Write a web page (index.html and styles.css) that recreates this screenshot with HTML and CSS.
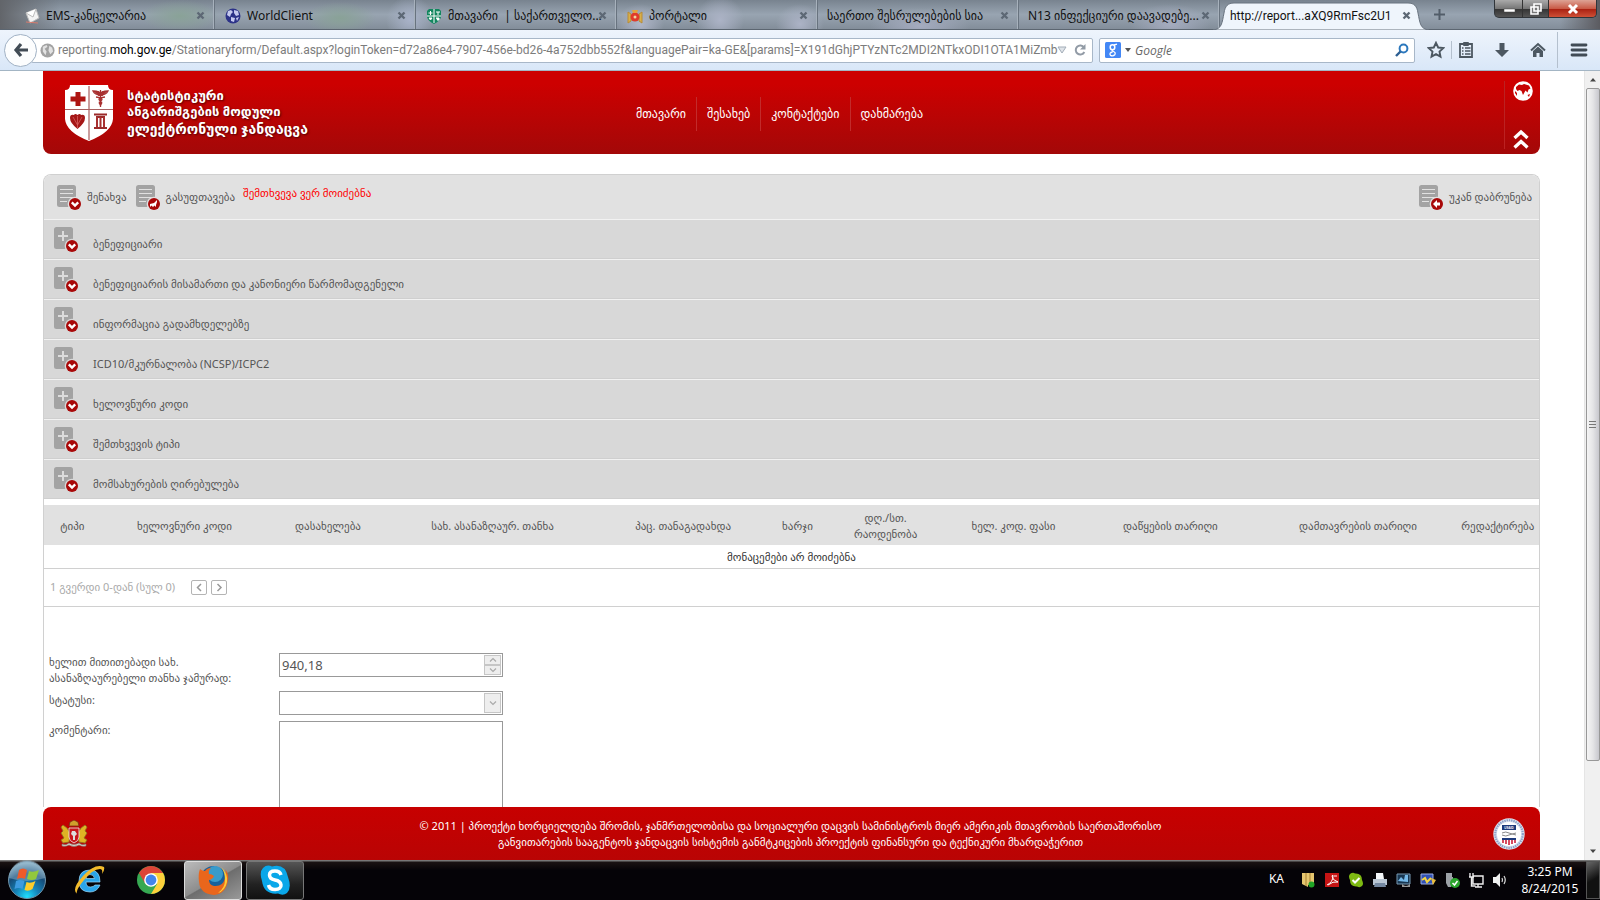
FILE: index.html
```html
<!DOCTYPE html>
<html lang="ka">
<head>
<meta charset="utf-8">
<title>http://reporting.moh.gov.ge</title>
<link rel="stylesheet" href="styles.css">
</head>
<body>
<svg class="defs" aria-hidden="true">
  <symbol id="close" viewBox="0 0 9 9"><path d="M1.500 1.500l6 6M7.500 1.500l-6 6" stroke="#5d6875" stroke-width="2.400"/></symbol>
  <symbol id="doc" viewBox="0 0 26 27"><rect x="1" y="1" width="19" height="22" rx="2.500" fill="#a3a3a3"/><path d="M4 5.500h13M4 9.500h13M4 13.500h13M4 17.500h7" stroke="#e1e1e1"/><circle cx="19" cy="20" r="7.300" fill="#e1e1e1"/><circle cx="19" cy="20" r="6" fill="#a80808"/></symbol>
  <symbol id="plus" viewBox="0 0 26 27"><rect x="1" y="1" width="19" height="22" rx="2.500" fill="#a3a3a3"/><path d="M5 10h10M10 5v10" stroke="#dcdcdc" stroke-width="2"/><circle cx="19" cy="20" r="7.300" fill="#d8d8d8"/><circle cx="19" cy="20" r="6" fill="#a80808"/><path d="M15.800 18.300l3.200 3.200 3.200-3.200" fill="none" stroke="#fff" stroke-width="2.400"/></symbol>
</svg>

<div class="tabs">
  <div class="tab"><svg class="fav" viewBox="0 0 16 16"><path d="M2 5l10-4 3 9-9 5z" fill="#f3f3f3" stroke="#bbb"/><path d="M2 5l7 4 3-8" fill="#fff" stroke="#bbb"/><path d="M2 14l12 1" stroke="#d87a6c"/></svg><span>EMS-კანცელარია</span><button aria-label="დახურვა"><svg><use href="#close"/></svg></button></div>
  <div class="tab"><svg class="fav" viewBox="0 0 16 16"><circle cx="8" cy="8" r="7.500" fill="#2c3288"/><path d="M3 3l3-1 2 2-2 2-1 3-3-2zM9 2l4 1 1 4-3 1-2-3zM6 9l4 1-1 4-3-1zM11 10l3-1-2 4z" fill="#c5c9ee"/></svg><span>WorldClient</span><button aria-label="დახურვა"><svg><use href="#close"/></svg></button></div>
  <div class="tab"><svg class="fav" viewBox="0 0 16 16"><path d="M3 1h10l2 2v6q-1 4-7 7q-6-3-7-7V3z" fill="#12865f"/><path d="M8 1v14M1 8h14" stroke="#fff"/><path d="M4.500 3v4M2.500 5h4M10 4h4M12 4v3M3 10h3l-1.500 2zM10 10h3v2h-2" stroke="#fff" fill="#fff"/></svg><span>მთავარი &nbsp;| საქართველო...</span><button aria-label="დახურვა"><svg><use href="#close"/></svg></button></div>
  <div class="tab"><svg class="fav" viewBox="0 0 16 16"><path d="M1 4l3 2v7l-3 2zM15 4l-3 2v7l3 2z" fill="#d8b04a" stroke="#b88b37"/><circle cx="8" cy="9" r="4.500" fill="#e03b2c"/><path d="M5 2h6l-1 3H6z" fill="#e4a13d"/><circle cx="8" cy="9" r="1.500" fill="#f0d4a0"/></svg><span>პორტალი</span><button aria-label="დახურვა"><svg><use href="#close"/></svg></button></div>
  <div class="tab bare"><span>საერთო შესრულებების სია</span><button aria-label="დახურვა"><svg><use href="#close"/></svg></button></div>
  <div class="tab bare"><span>N13 ინფექციური დაავადებე...</span><button aria-label="დახურვა"><svg><use href="#close"/></svg></button></div>
  <div class="tab active"><svg class="shape" viewBox="0 0 216 29" preserveAspectRatio="none"><path d="M0 29C9 28 9 22 11 12C12 5 15 2 21 2H195C201 2 204 5 205 12C207 22 207 28 216 29z" fill="#eff5fc" stroke="#69737f" stroke-width="1"/></svg><span>http://report...aXQ9RmFsc2U1</span><button aria-label="დახურვა"><svg><use href="#close"/></svg></button></div>
  <button class="newtab" aria-label="ახალი ჩანართი"><svg viewBox="0 0 11 11"><path d="M5.500 0v11M0 5.500h11" stroke="#525d69" stroke-width="2"/></svg></button>
  <div class="winbtns">
    <button aria-label="ჩაკეცვა"><svg viewBox="0 0 20 16"><rect x="5" y="8" width="11" height="3" fill="#fff" stroke="#444" stroke-width=".5"/></svg></button>
    <button aria-label="აღდგენა"><svg viewBox="0 0 20 16"><path d="M8 3h7v7h-7zM5 6h7v7H5z" fill="#777" stroke="#fff" stroke-width="1.600"/></svg></button>
    <button class="x" aria-label="დახურვა"><svg viewBox="0 0 20 16"><path d="M6 4l8 8M14 4l-8 8" stroke="#fff" stroke-width="3"/></svg></button>
  </div>
</div>

<div class="navbar">
  <button class="back" aria-label="უკან"><svg viewBox="0 0 16 16"><path d="M8 2L3 8l5 6M3 8h12" fill="none" stroke="#414b55" stroke-width="3.200"/></svg></button>
  <div class="url">
    <svg class="world" viewBox="0 0 16 16"><circle cx="8" cy="8" r="7.500" fill="#a2a2a2"/><path d="M3 4l4-2 1 2-3 2 2 3-1 4-3-4zM10 3l3 2 1 4-3 3-2-4z" fill="#e2e2e2"/></svg>
    <a href="#">reporting.<b>moh.gov.ge</b>/Stationaryform/Default.aspx?loginToken=d72a86e4-7907-456e-bd26-4a752dbb552f&amp;languagePair=ka-GE&amp;[params]=X191dGhjPTYzNTc2MDI2NTkxODI1OTA1MiZmb</a>
    <svg class="drop" viewBox="0 0 10 8"><path d="M1 1h8L5 7z" fill="#dfe4e9" stroke="#a3adb8"/></svg>
    <svg class="reload" viewBox="0 0 12 12"><path d="M10 3.500A4.500 4.500 0 1 0 10.300 8" fill="none" stroke="#929ba6" stroke-width="2"/><path d="M11.500 0v5.500H6z" fill="#929ba6"/></svg>
  </div>
  <div class="search">
    <svg class="g" viewBox="0 0 16 16"><rect width="16" height="16" rx="1.500" fill="#4387f5"/><ellipse cx="7.500" cy="5.200" rx="2.300" ry="2.500" fill="none" stroke="#fff" stroke-width="1.500"/><path d="M9 3l3-.8M8 7.500q-2 1 .5 2t1.300 3.300q-1.800 1.700-4.300.5q-1.800-2.500 2-3.300" fill="none" stroke="#fff" stroke-width="1.300"/></svg>
    <svg class="caret" viewBox="0 0 6 4"><path d="M0 0h6L3 4z" fill="#555"/></svg>
    <input type="text" placeholder="Google" aria-label="Google">
    <svg class="mag" viewBox="0 0 14 14"><circle cx="8.500" cy="5.500" r="3.900" fill="none" stroke="#2c78bd" stroke-width="2"/><path d="M5.500 8.500L1 13" stroke="#2c5f92" stroke-width="2.400"/></svg>
  </div>
  <div class="tools">
    <button aria-label="სანიშნე"><svg viewBox="0 0 18 18"><path d="M9 1.800l2.200 4.700 5.100.6-3.800 3.500 1 5.100L9 13.200l-4.500 2.500 1-5.100L1.700 7.100l5.100-.6z" fill="none" stroke="#4c5761" stroke-width="1.900"/></svg></button>
    <i class="sep"></i>
    <button aria-label="სია"><svg viewBox="0 0 18 18"><path d="M3 3h12v13H3z" fill="none" stroke="#4c5761" stroke-width="1.800"/><rect x="6" y="1" width="6" height="4" rx="1" fill="#4c5761"/><path d="M5 7h1.500M5 10h1.500M5 13h1.500M8 7h5.500M8 10h5.500M8 13h5.500" stroke="#4c5761" stroke-width="1.400"/></svg></button>
    <button aria-label="ჩამოტვირთვები"><svg viewBox="0 0 18 18"><path d="M6.500 2h5v7H16l-7 7-7-7h4.500z" fill="#4c5761"/></svg></button>
    <button aria-label="საწყისი"><svg viewBox="0 0 18 18"><path d="M2 9.500L9 3l7 6.500" fill="none" stroke="#4c5761" stroke-width="2"/><path d="M4 10l5-4.500L14 10v6h-3.500v-4h-3v4H4z" fill="#4c5761"/></svg></button>
    <i class="sep tall"></i>
    <button aria-label="მენიუ"><svg viewBox="0 0 18 18"><path d="M2 4h14M2 9h14M2 14h14" stroke="#414b55" stroke-width="2.800" stroke-linecap="round"/></svg></button>
  </div>
</div>

<div class="view">
  <div class="page">
    <header class="head">
      <div class="ident">
        <svg class="logo" viewBox="0 0 48 56"><path d="M5 0H43Q43 5 48 5V34Q47 47 24 56Q1 47 0 34V5Q5 5 5 0z" fill="#fff"/><path d="M24 1v54M0 24.500h48" stroke="#a86060" stroke-width="1.200"/><path d="M13 7v14M5.500 14h15" stroke="#ae1512" stroke-width="5"/><path d="M35.500 5v17M28 6q7 0 7.500 3q.5-3 7.500-3q-2 4-7.500 4q-5.500 0-7.500-4zM31 12q9 1 4.500 4q-3 2 1 4M40 12q-9 1-4.500 4q3 2-1 4" fill="none" stroke="#a83030" stroke-width="1.300"/><path d="M28.500 6h5l2 3 2-3h5l-5 5h-4z" fill="#a83030"/><path d="M12.500 44Q5 38 5 33q0-4 4-3q1-2 3.500 0q2.500-2 3.500 0q4-1 4 3q0 5-7.500 11z" fill="#a51717"/><path d="M12.500 43V31M12.500 40L8 32M12.500 40l4.500-8" stroke="#d66" stroke-width=".7"/><path d="M29 29.500h13M31 32h9M29 43h13" stroke="#9b2a2a" stroke-width="2"/><path d="M32 32v10M35.500 32v10M39 32v10" stroke="#a83030" stroke-width="2"/></svg>
        <div class="brand"><p>სტატისტიკური</p><p>ანგარიშგების მოდული</p><p class="sub">ელექტრონული ჯანდაცვა</p></div>
      </div>
      <nav><a href="#">მთავარი</a><a href="#">შესახებ</a><a href="#">კონტაქტები</a><a href="#">დახმარება</a></nav>
      <div class="side">
        <button aria-label="ენა"><svg viewBox="0 0 20 20"><circle cx="10" cy="10" r="9.800" fill="#fff"/><path d="M3 6l3-2.500 3 .5 2-1 5 1.500 1.500 3-2 1-1 3-2-2-2.500 4.500-1.500-4-2-1-2 1-1.500-2zM2 10l2 2v3l-2-3zM14.500 14l2.500-1-1 3z" fill="#c70505"/></svg></button>
        <button aria-label="აკეცვა"><svg viewBox="0 0 20 20"><path d="M1.500 9L8 3l6.500 6M1.500 18.500L8 12.500l6.500 6" fill="none" stroke="#fff" stroke-width="3.300"/></svg></button>
      </div>
    </header>

    <main class="panel">
      <div class="toolbar">
        <button><svg><use href="#doc"/><path d="M15.800 18.300l3.200 3.200 3.200-3.200" fill="none" stroke="#fff" stroke-width="2.400"/></svg>შენახვა</button>
        <button><svg><use href="#doc"/><path d="M15 23v-3l4-1 3-3v2l-1 3v2l-1.500-1.500L18 23l-1.500-1.500z" fill="#fff"/></svg>გასუფთავება</button>
        <p class="error">შემთხვევა ვერ მოიძებნა</p>
        <button class="ret"><svg><use href="#doc"/><path d="M15 20l4-4v2.500h3v3h-3V24z" fill="#fff"/></svg>უკან დაბრუნება</button>
      </div>
      <button class="row"><svg><use href="#plus"/></svg><span>ბენეფიციარი</span></button>
      <button class="row"><svg><use href="#plus"/></svg><span>ბენეფიციარის მისამართი და კანონიერი წარმომადგენელი</span></button>
      <button class="row"><svg><use href="#plus"/></svg><span>ინფორმაცია გადამხდელებზე</span></button>
      <button class="row"><svg><use href="#plus"/></svg><span>ICD10/მკურნალობა (NCSP)/ICPC2</span></button>
      <button class="row"><svg><use href="#plus"/></svg><span>ხელოვნური კოდი</span></button>
      <button class="row"><svg><use href="#plus"/></svg><span>შემთხვევის ტიპი</span></button>
      <button class="row"><svg><use href="#plus"/></svg><span>მომსახურების ღირებულება</span></button>

      <table class="grid">
        <colgroup><col class="c1"><col class="c2"><col class="c3"><col class="c4"><col class="c5"><col class="c6"><col class="c7"><col class="c8"><col class="c9"><col class="c10"><col class="c11"></colgroup>
        <thead><tr><th>ტიპი</th><th>ხელოვნური კოდი</th><th>დასახელება</th><th>სახ. ასანაზღაურ. თანხა</th><th>პაც. თანაგადახდა</th><th>ხარჯი</th><th>დღ./სთ.<br>რაოდენობა</th><th>ხელ. კოდ. ფასი</th><th>დაწყების თარიღი</th><th>დამთავრების თარიღი</th><th>რედაქტირება</th></tr></thead>
        <tbody><tr><td colspan="11">მონაცემები არ მოიძებნა</td></tr></tbody>
      </table>
      <div class="pager"><span>1 გვერდი 0-დან (სულ 0)</span><button aria-label="წინა"><svg viewBox="0 0 14 13"><path d="M9 3L5.500 6.500 9 10" fill="none" stroke="#999" stroke-width="1.500"/></svg></button><button aria-label="შემდეგი"><svg viewBox="0 0 14 13"><path d="M5.500 3L9 6.500 5.500 10" fill="none" stroke="#999" stroke-width="1.500"/></svg></button></div>

      <form class="form">
        <label for="sum">ხელით მითითებადი სახ.<br>ასანაზღაურებელი თანხა ჯამურად:</label>
        <div class="field"><input id="sum" type="text" value="940,18"><div class="spin"><button type="button" aria-label="მეტი"><svg viewBox="0 0 10 6"><path d="M2 4.500l3-3 3 3" fill="none" stroke="#aaa" stroke-width="1.200"/></svg></button><button type="button" aria-label="ნაკლები"><svg viewBox="0 0 10 6"><path d="M2 1.500l3 3 3-3" fill="none" stroke="#aaa" stroke-width="1.200"/></svg></button></div></div>
        <label for="status">სტატუსი:</label>
        <div class="field"><select id="status"><option></option></select><span class="arrow"><svg viewBox="0 0 10 6"><path d="M2 1.500l3 3 3-3" fill="none" stroke="#aaa" stroke-width="1.200"/></svg></span></div>
        <label for="note">კომენტარი:</label>
        <textarea id="note"></textarea>
      </form>
    </main>

    <footer class="foot">
      <svg class="arms" viewBox="0 0 28 28"><path d="M3 5l4 3 3 5-1 9-6 1-2-3 3-2-3-5 2-2-2-4zM25 5l-4 3-3 5 1 9 6 1 2-3-3-2 3-5-2-2 2-4z" fill="#dfb324" stroke="#8c7420" stroke-width=".8"/><path d="M9 8h10v9q0 4-5 6q-5-2-5-6z" fill="#c9161c" stroke="#eee" stroke-width=".8"/><path d="M12 11h3l2 3-2 2v4h-2v-4l-2-2z" fill="#ddd"/><path d="M9 6l1-4 4-2 4 2 1 4z" fill="#cf9f2c" stroke="#7b2815" stroke-width=".8"/><path d="M2 24q4 2 7-1q5 3 10 0q3 3 7 1v2q-4 1-7-1q-5 3-10 0q-3 2-7 1z" fill="#d9d6c9" stroke="#777" stroke-width=".6"/></svg>
      <p>© 2011 | პროექტი ხორციელდება შრომის, ჯანმრთელობისა და სოციალური დაცვის სამინისტროს მიერ ამერიკის მთავრობის საერთაშორისო<br>განვითარების სააგენტოს ჯანდაცვის სისტემის განმტკიცების პროექტის ფინანსური და ტექნიკური მხარდაჭერით</p>
      <svg class="usaid" viewBox="0 0 32 32"><circle cx="16" cy="16" r="15.700" fill="#dfe5f0"/><circle cx="16" cy="16" r="13.800" fill="none" stroke="#8ea1c8" stroke-width="2.200" stroke-dasharray="1.500 .8"/><circle cx="16" cy="16" r="12" fill="#fff"/><path d="M9 7h14v5H9z" fill="#1d3a7c"/><text x="16" y="11" text-anchor="middle" class="seal">USAID</text><path d="M9 15q4-2 7 0t7 0M9 17q4 2 7 0t7 0" stroke="#888" fill="none"/><path d="M9 20h14v2H9z" fill="#1d3a7c"/><path d="M10 22v3M13 22v4M16 22v5M19 22v4M22 22v3" stroke="#cc1f3b" stroke-width="1.600"/></svg>
    </footer>
  </div>
  <div class="scroll"><svg class="up" viewBox="0 0 8 5"><path d="M1 4.500L4 1l3 3.500z" fill="#444"/></svg><div class="thumb"><svg viewBox="0 0 8 9"><path d="M0 1.500h7M0 4.500h7M0 7.500h7" stroke="#777"/></svg></div><svg class="down" viewBox="0 0 8 5"><path d="M1 .5L4 4 7 .5z" fill="#444"/></svg></div>
</div>

<div class="taskbar">
  <button class="orb" aria-label="Start"><svg viewBox="0 0 40 40"><defs><radialGradient id="o" cx=".5" cy=".95" r=".9"><stop offset="0" stop-color="#1fe0ff"/><stop offset=".35" stop-color="#1583b8"/><stop offset=".7" stop-color="#164b77"/><stop offset="1" stop-color="#86aec5"/></radialGradient></defs><circle cx="20" cy="20" r="18.500" fill="url(#o)" stroke="#6f93a8"/><path d="M2 18A18 18 0 0 1 38 18Q20 24 2 18z" fill="#a8c6d6" opacity=".4"/><path d="M12 10q4-3 8 0l-2 9q-4-2-8 0z" fill="#ee5a29"/><path d="M22 11q4 2 10-1l-3 9q-4 2-9 0z" fill="#92c83d"/><path d="M9 21q4-2 8.500 0l-2 8q-4-2-8 0z" fill="#3d9be0"/><path d="M19.500 22q4 2 9-1l-3 8q-4 3-8 1z" fill="#fccd2b"/></svg></button>
  <button class="quick" aria-label="Internet Explorer"><svg viewBox="0 0 32 32"><path d="M27 18H13q0 5 4.500 5q3 0 4.500-2h5q-3 7-10 7Q6 28 6 17T17 6q10 0 10 12zM13 14.500h8.500q-.5-4-4.500-4T13 14.500z" fill="#2aa5ea" stroke="#9bd9fa" stroke-width=".7"/><path d="M4 30Q-2 25 10 12T31 3q1 3-2 7q1-5-2-5q-7 0-16 11T4 30z" fill="#f3bb2b"/></svg></button>
  <button class="quick" aria-label="Chrome"><svg viewBox="0 0 32 32"><circle cx="16" cy="16" r="14" fill="#36a852"/><path d="M16 16L3.900 9A14 14 0 0 1 28.100 9z" fill="#dc4437"/><path d="M16 9h12.100A14 14 0 0 1 16 30l6-10z" fill="#fdd03b"/><path d="M3.900 9l6 10 6-9z" fill="#dc4437"/><circle cx="16" cy="16" r="6.800" fill="#fff"/><circle cx="16" cy="16" r="5.400" fill="#4285ec"/></svg></button>
  <button class="app on" aria-label="Firefox"><svg viewBox="0 0 32 32"><circle cx="16.500" cy="15" r="13" fill="#17619c"/><circle cx="18" cy="10" r="8" fill="#47b4df" opacity=".7"/><path d="M3 5q2 2 5 2 2-3 6-3-3 3-2 6 3 0 5 2-1 3-5 4 0 5 5 6 9 1 11-8 2-4 0-9 4 5 3 11-2 14-14 15Q3 30 2 18 1 10 3 5z" fill="#e9661c"/><path d="M24 3q7 6 6 15-2 9-9 11 7-5 7-13 0-8-4-13z" fill="#fccb36"/></svg></button>
  <button class="app" aria-label="Skype"><svg viewBox="0 0 32 32"><path d="M4 4Q8 0 13 2.500Q26-1 29 13Q33 24 28 29Q24 32 19 29.500Q5 31 3 17Q0 8 4 4z" fill="#0aa7e9"/><path d="M22 11Q21 7 16 7q-5.500 0-5.500 4t5.500 5 6 5-6 4.500q-5.500 0-6.500-4.500" fill="none" stroke="#fff" stroke-width="3.500"/></svg></button>
  <div class="tray">
    <span class="lang">KA</span>
    <svg viewBox="0 0 16 16"><path d="M2 1h12v12H8v2L2 12z" fill="#e5c66f"/><path d="M6 1v13M10 1v12" stroke="#a67f32"/><circle cx="11.500" cy="12.500" r="3" fill="#20a526"/></svg>
    <svg viewBox="0 0 16 16"><path d="M1 1h14v14H1z" fill="#c51414"/><path d="M3 13q6-3 6-9 0-2-1 0 0 4 6 6-5-1-10 3M10 4h3" fill="none" stroke="#fff"/></svg>
    <svg viewBox="0 0 16 16"><path d="M2 2q3-2 5-.5Q14 1 14 8q2 4 0 6-2 2-5 .5Q2 15 2 8q-2-4 0-6z" fill="#7eba12"/><path d="M4.500 8l2.500 2.500L11.500 6" fill="none" stroke="#fff" stroke-width="2"/></svg>
    <svg viewBox="0 0 16 16"><path d="M4 1h7l1 6H4z" fill="#f4f7fa"/><path d="M1 7h14v6H1z" fill="#bac6d3"/><path d="M3 11h10l1 4H2z" fill="#7588a1"/></svg>
    <svg viewBox="0 0 16 16"><path d="M1 2h13v10H1z" fill="#183651" stroke="#7899b3"/><path d="M2 9l3-4 3 3 1-5h3v7" fill="#75b9e9"/><path d="M6 12q4 4 8 0v3H6z" fill="#999"/></svg>
    <svg viewBox="0 0 16 16"><path d="M1 2h12v10H1z" fill="#3151b4" stroke="#9eb0e6"/><path d="M2 8l3-2 2 4 4-4" stroke="#f4d541" stroke-width="2" fill="none"/><path d="M11 6l5 2-3 5z" fill="#e9bd3e"/></svg>
    <svg viewBox="0 0 16 16"><path d="M2 1h6v4h1v6l-2 4H4l-2-4z" fill="#9ca1a6"/><circle cx="11" cy="11" r="5" fill="#2ba52d"/><path d="M8.500 11l2 2 3-4" fill="none" stroke="#fff" stroke-width="1.500"/></svg>
    <svg viewBox="0 0 16 16"><path d="M5 4h10v8H5zM7 15h7M10 12v3M2 1v4M5 1v4M1 5h5M3.500 5v9h4" fill="none" stroke="#eee" stroke-width="1.400"/></svg>
    <svg viewBox="0 0 16 16"><path d="M1 5h3l4-4v14l-4-4H1z" fill="#f1f1f1"/><path d="M10 6q1 2 0 4M12 4q2.500 4 0 8" fill="none" stroke="#ddd" stroke-width="1.200"/></svg>
    <div class="clock">3:25 PM<br>8/24/2015</div>
    <button class="desk" aria-label="Show desktop"></button>
  </div>
</div>
</body>
</html>
```
FILE: styles.css
```css
* { box-sizing: border-box; }
body { margin: 0; height: 100vh; display: flex; flex-direction: column; overflow: hidden; background: #fff; color: #555; font: 11px/16px "Noto Sans", "DejaVu Sans", sans-serif; }
button { margin: 0; padding: 0; border: 0; background: none; color: inherit; font: inherit; display: flex; align-items: center; }
p { margin: 0; }
svg { flex: none; display: block; }
.defs { position: absolute; width: 0; height: 0; }

.tabs { height: 30px; flex: none; display: flex; align-items: stretch; padding-left: 14px; color: #111; font: 12px/16px "Noto Sans", "DejaVu Sans", sans-serif;
  background:
    radial-gradient(ellipse 40px 16px at 180px 16px, #89a297, transparent),
    radial-gradient(ellipse 36px 16px at 340px 18px, #89a297, transparent),
    radial-gradient(ellipse 24px 24px at 410px 20px, #a8b2c8, transparent),
    radial-gradient(ellipse 24px 20px at 640px 24px, #b0b6c9, transparent),
    radial-gradient(ellipse 24px 24px at 720px 20px, #acb3c6, transparent),
    radial-gradient(ellipse 24px 20px at 800px 24px, #acb3c6, transparent),
    radial-gradient(ellipse 50px 18px at 920px 26px, #a5acc0, transparent),
    radial-gradient(ellipse 40px 20px at 1170px 24px, #a5acc0, transparent),
    linear-gradient(90deg, #62656a, transparent 60px, transparent 1560px, #5b5b60),
    linear-gradient(#78838f, #98a4b1 50%, #8590 100%), #838e9a;
  border-bottom: 1px solid #5c6671; }
.tab { flex: 0 1 201px; min-width: 0; display: flex; align-items: center; padding: 2px 9px 0 10px; border-right: 1px solid #68737f; box-shadow: inset -2px 0 0 -1px #a7b1bc; white-space: nowrap; }
.tab span { flex: 1; min-width: 0; }
.tab button svg { width: 9px; height: 9px; }
.fav { width: 16px; height: 16px; margin-right: 6px; }
.bare { padding-left: 9px; }
.tab.active { position: relative; border: 0; box-shadow: none; padding: 2px 10px 0 10px; font-family: Roboto, sans-serif; }
.active span, .active button { position: relative; }
.shape { position: absolute; left: -7px; top: 1px; width: 216px; height: 29px; }
.newtab { margin-left: 13px; }
.newtab svg { width: 11px; height: 11px; }
.winbtns { margin-left: auto; margin-right: 3px; height: 18px; display: flex; border: 1px solid #30353a; border-top: 0; border-radius: 0 0 5px 5px; overflow: hidden; background: linear-gradient(#aaa, #777 50%, #333 52%, #555); }
.winbtns button { width: 28px; justify-content: center; border-right: 1px solid #333; }
.winbtns button + button { width: 26px; }
.winbtns svg { width: 20px; height: 16px; }
.winbtns .x { width: 47px; border: 0; background: linear-gradient(#dda395, #c95b47 50%, #a81f10 52%, #cf5036); }

.navbar { height: 41px; flex: none; display: flex; align-items: center; padding: 0 12px 0 4px; background: linear-gradient(#eef4fc, #d9e7f8); border-bottom: 1px solid #a3b5c4; font: 12px/16px Roboto, sans-serif; }
.back { position: relative; z-index: 1; width: 33px; height: 33px; border: 1px solid #a0b1c4; border-radius: 50%; background: #fcfdfe; justify-content: center; }
.back svg { width: 16px; height: 16px; }
.url { flex: 1; min-width: 0; height: 25px; margin-left: -6px; padding: 0 6px 0 8px; display: flex; align-items: center; gap: 3px; background: #fff; border: 1px solid #a8b7c8; border-radius: 2px; }
.url a { flex: 1; min-width: 0; white-space: nowrap; color: #7c7c7c; text-decoration: none; }
.url b { font-weight: 400; color: #000; }
.world { width: 15px; height: 15px; }
.drop { width: 10px; height: 8px; }
.reload { width: 12px; height: 12px; margin-left: 4px; }
.search { width: 316px; height: 25px; margin-left: 6px; padding: 0 5px; display: flex; align-items: center; gap: 4px; background: #fff; border: 1px solid #a8b7c8; border-radius: 2px; }
.g { width: 16px; height: 16px; }
.caret { width: 6px; height: 4px; }
.search input { flex: 1; min-width: 0; border: 0; padding: 0; font: italic 12px "Open Sans", sans-serif; outline: 0; }
.search input::placeholder { color: #666; opacity: 1; }
.mag { width: 14px; height: 14px; }
.tools { display: flex; align-items: center; margin-left: 12px; height: 100%; }
.tools button { width: 18px; margin-right: 18px; }
.tools button:first-child { margin-right: 6px; }
.tools svg { width: 18px; height: 18px; }
.sep { width: 1px; height: 18px; margin-right: 5px; background: #b4c0ce; }
.sep.tall { height: 36px; margin: 0 12px 0 -8px; }
.tools button:last-child { margin-right: 0; }

.view { flex: 1; min-height: 0; display: flex; }
.page { flex: 1; min-width: 0; display: flex; flex-direction: column; padding: 0 44px 0 43px; }
.head { flex: none; height: 83px; display: grid; grid-template-columns: 1fr auto 1fr; background: linear-gradient(#cd0000 15%, #a30808); color: #fff; border-radius: 0 0 8px 8px; }
.ident { display: flex; gap: 14px; padding-left: 22px; }
.logo { width: 48px; height: 56px; margin-top: 14px; }
.brand { padding-top: 16px; font-weight: 700; font-size: 13px; white-space: nowrap; text-shadow: 1px 1px 2px #500; }
.sub { padding-top: 2px; font-size: 14px; }
nav { display: flex; align-items: center; padding: 2px 24px 0 0; height: 83px; }
nav a { padding: 9px 10px; color: #fff; text-decoration: none; font-size: 12px; border-left: 1px solid #c22b2b; }
nav a:first-child { border: 0; }
.side { justify-self: end; width: 36px; margin: 10px 0 0; height: 68px; border-left: 1px solid #bb2222; display: flex; flex-direction: column; justify-content: space-between; align-items: center; }
.side svg { width: 20px; height: 20px; }

.panel { flex: 1; min-height: 0; overflow: hidden; margin-top: 20px; border: 1px solid #d0d0d0; border-bottom: 0; border-radius: 8px 8px 0 0; }
.toolbar { height: 44px; display: flex; align-items: center; gap: 8px; padding: 0 7px 0 12px; background: #e1e1e1; }
.toolbar button { gap: 5px; height: 27px; }
.toolbar svg, .row svg { width: 26px; height: 27px; }
.error { color: #f00; padding-bottom: 8px; }
.ret { margin-left: auto; }
.row { width: 100%; height: 40px; padding: 1px 0 0 9px; gap: 14px; background: #d8d8d8; border-top: 1px solid #f2f2f2; border-bottom: 1px solid #cfcfcf; text-align: left; }
.row span { padding-top: 8px; }
.grid { width: 100%; margin-top: 6px; border-collapse: collapse; table-layout: fixed; }
.grid th { height: 40px; padding: 2px 0 0; background: #e1e1e1; font-weight: 400; white-space: nowrap; }
.grid td { height: 23px; padding: 1px 0 0; text-align: center; color: #333; border-bottom: 1px solid #d0d0d0; }
.c1 { width: 3.8%; }
.c2 { width: 11.2%; }
.c3, .c7 { width: 8%; }
.c4 { width: 14%; }
.c5 { width: 11.5%; }
.c6 { width: 3.8%; }
.c8 { width: 9.1%; }
.c9 { width: 11.9%; }
.c10 { width: 13.2%; }
.c11 { width: 5.5%; }
.pager { height: 38px; display: flex; align-items: center; gap: 4px; padding-left: 6px; border-bottom: 1px solid #d0d0d0; color: #aaa; }
.pager span { padding-right: 12px; }
.pager button { width: 16px; height: 15px; border: 1px solid #b4b4b4; border-radius: 2px; justify-content: center; }
.pager svg { width: 14px; height: 13px; }
.form { display: grid; grid-template-columns: 230px 224px; row-gap: 5px; padding: 46px 0 0 5px; align-items: start; }
.form label { padding-top: 1px; }
.field { position: relative; height: 25px; }
.field input, .field select, .form textarea { width: 100%; height: 24px; padding: 0 2px; border: 1px solid #999; border-radius: 0; background: #fff; color: #555; font: 13px "Noto Sans", sans-serif; appearance: none; display: block; }
.form textarea { height: 120px; resize: none; }
.spin, .arrow { position: absolute; right: 2px; top: 2px; bottom: 3px; width: 17px; display: flex; flex-direction: column; }
.spin button, .arrow { flex: 1; justify-content: center; align-items: center; background: #eee; border: 1px solid #c6c6c6; }
.spin svg, .arrow svg { width: 10px; height: 6px; }
.foot { flex: none; min-height: 53px; display: flex; align-items: center; justify-content: space-between; padding: 0 15px 0 17px; background: linear-gradient(#c70000, #b90404); border-radius: 8px 8px 0 0; color: #fff; text-align: center; }
.arms { width: 28px; height: 28px; }
.usaid { width: 32px; height: 32px; }
.seal { font: bold 3px "Liberation Sans"; fill: #fff; }
.scroll { width: 16px; display: flex; flex-direction: column; align-items: center; background: #f0f0f0; border-left: 1px solid #e5e5e5; }
.up, .down { width: 8px; height: 5px; margin: 6px 0; }
.thumb { width: 14px; flex: 1; margin-bottom: 82px; display: flex; align-items: center; justify-content: center; border: 1px solid #989898; border-radius: 2px; background: linear-gradient(90deg, #f5f5f5, #e4e4e6 50%, #c7c7cd); }
.thumb svg { width: 8px; height: 9px; }

.taskbar { height: 40px; flex: none; display: flex; align-items: center; background: linear-gradient(#777 1px, #1a1212 2px, #050307 10px); color: #fff; font: 12px/17px "Noto Sans", sans-serif; }
.orb { width: 54px; justify-content: center; }
.orb svg { width: 40px; height: 40px; }
.quick { width: 62px; justify-content: center; padding-left: 8px; }
.quick svg, .app svg { width: 32px; height: 32px; }
.app { width: 58px; height: 39px; margin-left: 4px; justify-content: center; border: 1px solid #777; border-radius: 3px; background: linear-gradient(#555, #222 60%, #111); }
.app.on { border-color: #ddd; margin-left: 6px; background: linear-gradient(150deg, #bbb, #8d8d8d 50%, #6d6d6d 52%, #999); }
.tray { margin-left: auto; height: 100%; display: flex; align-items: center; gap: 8px; }
.tray > svg { width: 16px; height: 16px; }
.lang { margin-right: 8px; padding-bottom: 4px; }
.clock { width: 68px; text-align: center; margin-right: -6px; }
.desk { width: 14px; height: 38px; border: 1px solid #555; background: linear-gradient(150deg, #666, #111 50%); }
```
